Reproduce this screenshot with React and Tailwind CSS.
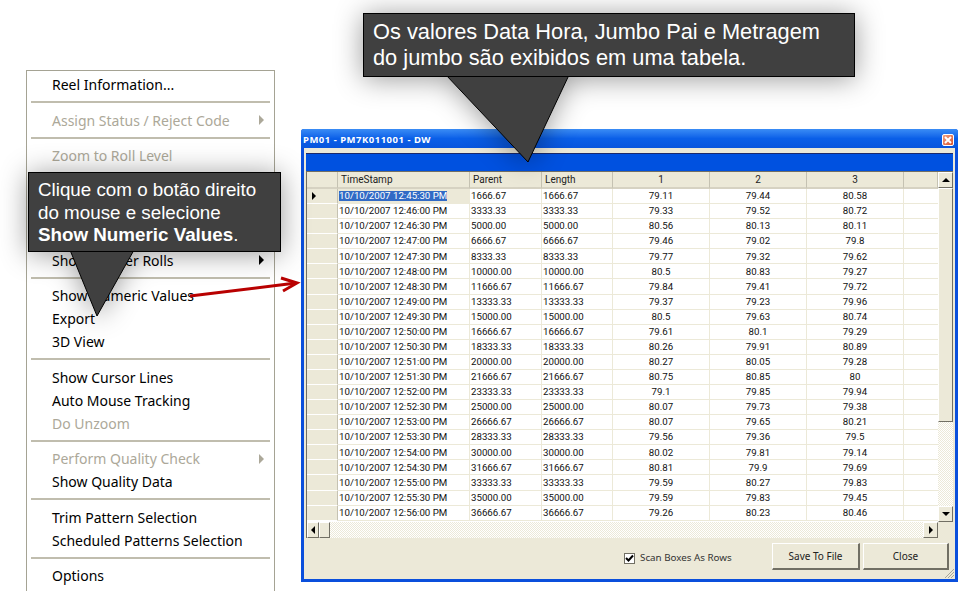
const menuSections = [
  [{ label: "Reel Information..." }],
  [{ label: "Assign Status / Reject Code", disabled: true, sub: true }],
  [{ label: "Zoom to Roll Level", disabled: true }],
  [{ spacer: true }, { label: "Show Winder Rolls", sub: true }],
  [{ label: "Show Numeric Values" }, { label: "Export" }, { label: "3D View" }],
  [{ label: "Show Cursor Lines" }, { label: "Auto Mouse Tracking" }, { label: "Do Unzoom", disabled: true }],
  [{ label: "Perform Quality Check", disabled: true, sub: true }, { label: "Show Quality Data" }],
  [{ label: "Trim Pattern Selection" }, { label: "Scheduled Patterns Selection" }],
  [{ label: "Options" }],
];

const rows = [
  ["10/10/2007 12:45:30 PM", "1666.67", "1666.67", "79.11", "79.44", "80.58"],
  ["10/10/2007 12:46:00 PM", "3333.33", "3333.33", "79.33", "79.52", "80.72"],
  ["10/10/2007 12:46:30 PM", "5000.00", "5000.00", "80.56", "80.13", "80.11"],
  ["10/10/2007 12:47:00 PM", "6666.67", "6666.67", "79.46", "79.02", "79.8"],
  ["10/10/2007 12:47:30 PM", "8333.33", "8333.33", "79.77", "79.32", "79.62"],
  ["10/10/2007 12:48:00 PM", "10000.00", "10000.00", "80.5", "80.83", "79.27"],
  ["10/10/2007 12:48:30 PM", "11666.67", "11666.67", "79.84", "79.41", "79.72"],
  ["10/10/2007 12:49:00 PM", "13333.33", "13333.33", "79.37", "79.23", "79.96"],
  ["10/10/2007 12:49:30 PM", "15000.00", "15000.00", "80.5", "79.63", "80.74"],
  ["10/10/2007 12:50:00 PM", "16666.67", "16666.67", "79.61", "80.1", "79.29"],
  ["10/10/2007 12:50:30 PM", "18333.33", "18333.33", "80.26", "79.91", "80.89"],
  ["10/10/2007 12:51:00 PM", "20000.00", "20000.00", "80.27", "80.05", "79.28"],
  ["10/10/2007 12:51:30 PM", "21666.67", "21666.67", "80.75", "80.85", "80"],
  ["10/10/2007 12:52:00 PM", "23333.33", "23333.33", "79.1", "79.85", "79.94"],
  ["10/10/2007 12:52:30 PM", "25000.00", "25000.00", "80.07", "79.73", "79.38"],
  ["10/10/2007 12:53:00 PM", "26666.67", "26666.67", "80.07", "79.65", "80.21"],
  ["10/10/2007 12:53:30 PM", "28333.33", "28333.33", "79.56", "79.36", "79.5"],
  ["10/10/2007 12:54:00 PM", "30000.00", "30000.00", "80.02", "79.81", "79.14"],
  ["10/10/2007 12:54:30 PM", "31666.67", "31666.67", "80.81", "79.9", "79.69"],
  ["10/10/2007 12:55:00 PM", "33333.33", "33333.33", "79.59", "80.27", "79.83"],
  ["10/10/2007 12:55:30 PM", "35000.00", "35000.00", "79.59", "79.83", "79.45"],
  ["10/10/2007 12:56:00 PM", "36666.67", "36666.67", "79.26", "80.23", "80.46"],
];

const raised = "border border-t-white border-l-white border-r-[#716f64] border-b-[#716f64] bg-[#ece9d8]";

function MenuRow({ label, disabled, sub }) {
  return (
    <div className={`h-[23px] pl-[25px] pr-[10px] flex items-center justify-between text-[14px] ${disabled ? "text-[#aca899]" : "text-black"}`}>
      <span>{label}</span>
      {sub && <span className={`w-0 h-0 border-y-[5px] border-y-transparent border-l-[5px] ${disabled ? "border-l-[#aca899]" : "border-l-black"}`} />}
    </div>
  );
}

function ContextMenu() {
  return (
    <div className="w-[249px] h-[521px] bg-white border-x border-t border-[#a5a394] pt-[2px] overflow-hidden shrink-0" style={{ fontFamily: '"Noto Sans", sans-serif' }}>
      {menuSections.map((section, i) => (
        <div key={i}>
          {i > 0 && <div className="h-[12.5px] flex items-center px-[4px]"><div className="h-[2px] w-full bg-[#c0bdae]" /></div>}
          {section.map((item, j) => item.spacer ? <div key={j} className="h-[69px]" /> : <MenuRow key={j} {...item} />)}
        </div>
      ))}
    </div>
  );
}

function Arrow({ dir }) {
  const cls = {
    up: "border-x-[4px] border-x-transparent border-b-[4px] border-b-black",
    down: "border-x-[4px] border-x-transparent border-t-[4px] border-t-black",
    left: "border-y-[4px] border-y-transparent border-r-[4px] border-r-black",
    right: "border-y-[4px] border-y-transparent border-l-[4px] border-l-black",
  }[dir];
  return <span className={`w-0 h-0 ${cls}`} />;
}

function ScrollButton({ dir, className = "" }) {
  return <div className={`${raised} flex items-center justify-center shrink-0 ${className}`}><Arrow dir={dir} /></div>;
}

const dither = "bg-[repeating-conic-gradient(#ffffff_0_25%,#ece9d8_0_50%)] bg-[length:2px_2px]";
const columns = "grid grid-cols-[31px_132px_72px_71px_97px_97px_97px_34px]";

function DataGrid() {
  return (
    <div className="relative flex-1 border-t border-l border-[#716f64] bg-white overflow-hidden" style={{ fontFamily: 'Roboto, sans-serif' }}>
      <div className="flex h-[350px]">
        <div className="w-[631px] shrink-0">
          <div className={`${columns} h-[17px] text-[10px] text-[#222]`}>
            {["", "TimeStamp", "Parent", "Length", "1", "2", "3", ""].map((h, i) => (
              <div key={i} className={`bg-[#ece9d8] border-r border-b-2 border-r-[#c5c2b2] border-b-[#d6d2c2] flex items-center ${i > 3 ? "justify-center" : "pl-[3px]"}`}>{h}</div>
            ))}
          </div>
          {rows.map((row, r) => (
            <div key={r} className={`${columns} h-[15.08px] text-[9.7px] leading-none text-[#111]`}>
              <div className="bg-[#ece9d8] border-r border-b border-r-[#c5c2b2] border-b-white flex items-center pl-[5px]">
                {r === 0 && <Arrow dir="right" />}
              </div>
              {row.map((v, c) => (
                <div key={c} className={`border-r border-b border-[#ece9d8] flex items-center ${c > 2 ? "justify-center" : "pl-[1px]"} ${r === 0 && c === 0 ? "bg-[#ece9d8]" : ""}`}>
                  <span className={r === 0 && c === 0 ? "bg-[#316ac5] text-white" : ""}>{v}</span>
                </div>
              ))}
              <div className="border-b border-[#ece9d8]" />
            </div>
          ))}
        </div>
        <div className="w-[15px] shrink-0 flex flex-col">
          <ScrollButton dir="up" className="h-[16px]" />
          <div className={`${raised} h-[234px]`} />
          <div className={`flex-1 ${dither}`} />
          <ScrollButton dir="down" className="h-[16px]" />
        </div>
      </div>
      <div className="flex h-[16px] bg-[#ece9d8]">
        <div className="flex w-[631px]">
          <ScrollButton dir="left" className="w-[12px]" />
          <div className={`${raised} w-[11px] shrink-0`} />
          <div className={`flex-1 ${dither}`} />
          <ScrollButton dir="right" className="w-[15px]" />
        </div>
      </div>
    </div>
  );
}

function DialogWindow() {
  return (
    <div className="w-[657px] h-[453px] flex flex-col rounded-t-[3px] bg-[#0a4fdc] px-[3px] pb-[3px] shrink-0" style={{ fontFamily: '"Noto Sans", sans-serif' }}>
      <div className="h-[19px] -mx-[3px] pl-[2px] pr-[4px] pt-[3px] flex items-center justify-between rounded-t-[3px] bg-gradient-to-b from-[#3a8cf5] via-[#0a5fe8] to-[#0855dd]">
        <span className="text-[9.5px] font-bold text-white tracking-[0.5px]">PM01 - PM7K011001 - DW</span>
        <span className="w-[12px] h-[12px] rounded-[2px] bg-gradient-to-br from-[#f0a080] to-[#d8502a] border border-white flex items-center justify-center">
          <svg width="8" height="8" viewBox="0 0 8 8"><path d="M1 1 L7 7 M7 1 L1 7" stroke="#fff" strokeWidth="2" /></svg>
        </span>
      </div>
      <div className="flex-1 flex flex-col bg-[#ece9d8] pt-[5px] px-[2px]">
        <div className="h-[18px] bg-[#0051e0] border-t border-[#1c2a6b]" />
        <DataGrid />
        <div className="h-[41px] flex items-start relative">
          <label className="self-center ml-[318px] w-[108px] flex items-center gap-[5px] text-[9.8px] text-[#333] whitespace-nowrap">
            <span className="w-[11px] h-[11px] shrink-0 bg-white border border-[#716f64] flex items-center justify-center">
              <svg width="9" height="9" viewBox="0 0 9 9"><path d="M1 4 L3.5 6.5 L8 1.5" fill="none" stroke="#000" strokeWidth="2" /></svg>
            </span>
            Scan Boxes As Rows
          </label>
          <button className={`${raised} mt-[5px] ml-[40px] w-[88px] h-[27px] text-[10px] text-[#222] border-r-2 border-b-2`}>Save To File</button>
          <button className={`${raised} mt-[5px] ml-[3px] w-[86px] h-[27px] text-[10px] text-[#222] border-r-2 border-b-2`}>Close</button>
          <svg className="absolute right-[-2px] bottom-0" width="11" height="11" viewBox="0 0 11 11">
            <path d="M10 1 L1 10 M10 4 L4 10 M10 7 L7 10" stroke="#a8a698" strokeWidth="1" fill="none" />
          </svg>
        </div>
      </div>
    </div>
  );
}

function Callout({ className, boxClass, children, triangle }) {
  return (
    <div className={`absolute drop-shadow-[0_2px_14px_rgba(0,0,0,0.4)] ${className}`} style={{ fontFamily: '"Liberation Sans", Arial, sans-serif' }}>
      {triangle}
      <div className={`relative bg-[#404040] border border-black text-white whitespace-nowrap ${boxClass}`}>{children}</div>
    </div>
  );
}

export default function App() {
  return (
    <div className="relative w-[967px] h-[599px] overflow-hidden bg-white">
      <div className="flex items-start pl-[26px] pt-[70px]">
        <ContextMenu />
        <div className="ml-[26px] mt-[59px]">
          <DialogWindow />
        </div>
      </div>

      <svg className="absolute left-0 top-0 pointer-events-none" width="967" height="599">
        <path d="M190 296 L296 283" stroke="#b80000" strokeWidth="3" fill="none" />
        <path d="M281 278 L297 283 L283 291" stroke="#b80000" strokeWidth="3" fill="none" />
      </svg>

      <Callout
        className="left-[28px] top-[172px] w-[253px]"
        boxClass="h-[80px] pl-[9px] pt-[6px] text-[18.8px] leading-[22.5px]"
        triangle={
          <svg className="absolute left-[40px] top-[78px]" width="68" height="68" viewBox="0 0 68 68">
            <path d="M2 0 L66 0 L29 66 Z" fill="#404040" stroke="#000" strokeWidth="1" />
          </svg>
        }
      >
        Clique com o botão direito<br />do mouse e selecione<br /><b>Show Numeric Values</b>.
      </Callout>

      <Callout
        className="left-[363px] top-[13px] w-[492px]"
        boxClass="h-[64px] pl-[9px] pt-[5px] text-[21.8px] leading-[26px]"
        triangle={
          <svg className="absolute left-[82px] top-[62px]" width="126" height="90" viewBox="0 0 126 90">
            <path d="M1 0 L124 0 L83 87 Z" fill="#404040" stroke="#000" strokeWidth="1" />
          </svg>
        }
      >
        Os valores Data Hora, Jumbo Pai e Metragem<br />do jumbo são exibidos em uma tabela.
      </Callout>
    </div>
  );
}
